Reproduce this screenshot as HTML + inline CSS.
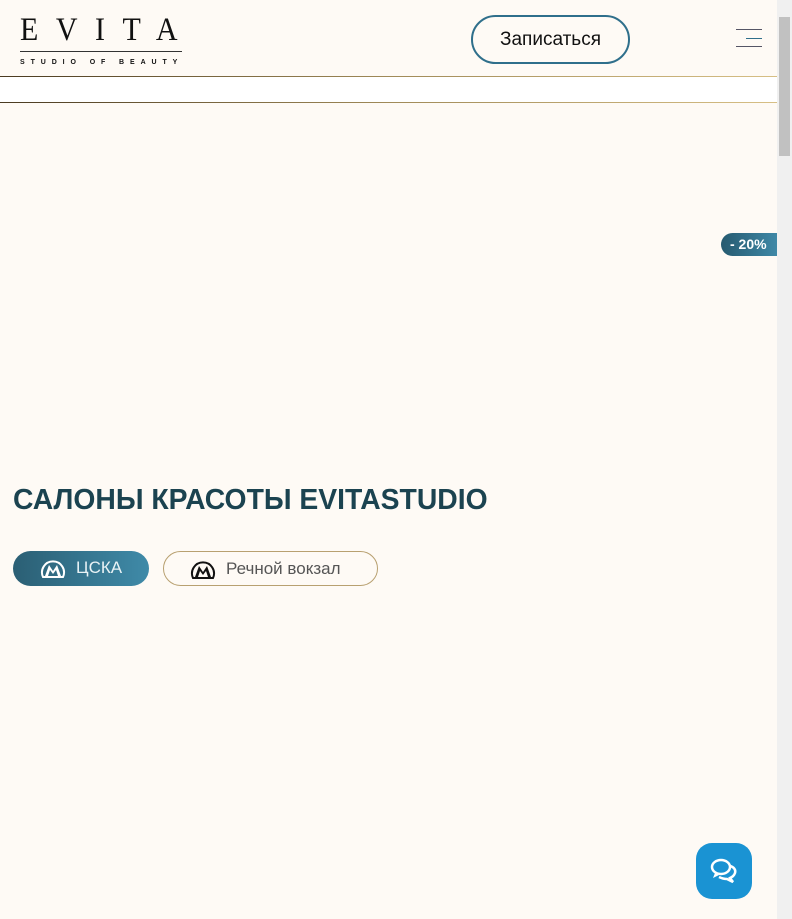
<!DOCTYPE html>
<html><head><meta charset="utf-8"><style>
*{margin:0;padding:0;box-sizing:border-box}
body{width:792px;height:919px;background:#fefaf5;font-family:"Liberation Sans",sans-serif;position:relative;overflow:hidden}
.sb{position:absolute;right:0;top:0;width:15px;height:919px;background:#f0f0f0}
.sb .th{position:absolute;left:2px;top:17px;width:11px;height:139px;background:#c1c1c1}
.logo{position:absolute;left:20px;top:14px;width:162px}
.logo .t{font-family:"Liberation Serif",serif;font-size:30px;letter-spacing:17.5px;color:#111;line-height:36px;height:37px;transform:scaleY(1.1);transform-origin:0 100%;white-space:nowrap}
.logo .l{border-top:1px solid #333}
.logo .s{font-size:7px;letter-spacing:5.9px;font-weight:bold;color:#111;margin-top:7px;white-space:nowrap}
.btn{position:absolute;left:471px;top:15px;width:159px;height:49px;border:2px solid #2f6f8b;border-radius:25px;text-align:center;line-height:45px;font-size:19px;color:#111}
.menu div{position:absolute;right:30px;height:1px;background:#556}
.hl{position:absolute;left:0;width:777px;height:1px;background:linear-gradient(90deg,#4a3a20,#a08a58,#d7bf85)}
.strip{position:absolute;left:0;top:77px;width:777px;height:25px;background:#fff}
.badge{position:absolute;left:721px;top:233px;width:56px;height:23px;background:linear-gradient(90deg,#265a70,#3f88a6);border-radius:12px 0 0 12px;color:#fff;font-size:14px;line-height:23px;padding-left:9px;font-weight:bold}
h1{position:absolute;left:13px;top:484px;font-size:29px;font-weight:900;color:#1b4350;letter-spacing:0;transform:scaleX(0.976);transform-origin:0 0;white-space:nowrap}
.p{position:absolute;top:551px;height:35px;border-radius:18px;font-size:17px;line-height:33px}
.p1{left:13px;width:136px;background:linear-gradient(90deg,#2b5f74,#3f8aa8);color:#e8f2f5}
.p2{left:163px;width:215px;border:1px solid #b8a070;color:#555}
.p svg{position:absolute;top:7px}
.chat{position:absolute;left:696px;top:843px;width:56px;height:56px;border-radius:16px;background:#1a93d3}
</style></head><body>
<div class="logo"><div class="t">EVITA</div><div class="l"></div><div class="s">STUDIO OF BEAUTY</div></div>
<div class="btn">Записаться</div>
<div class="menu"><div style="top:29px;width:26px"></div><div style="top:38px;width:16px;background:#2f6f8b"></div><div style="top:46px;width:26px"></div></div>
<div class="hl" style="top:76px"></div>
<div class="strip"></div>
<div class="hl" style="top:102px"></div>
<div class="badge">- 20%</div>
<h1>САЛОНЫ КРАСОТЫ EVITASTUDIO</h1>
<div class="p p1"><svg style="left:27px" width="26" height="21" viewBox="0 0 26 21"><path d="M3 19A11 11 0 1 1 23 19Z" fill="none" stroke="#fff" stroke-width="2"/><path d="M5 18L9 7L13 13L17 7L21 18H18L16 12L13 16L10 12L8 18Z" fill="#fff"/></svg><span style="position:absolute;left:63px">ЦСКА</span></div>
<div class="p p2"><svg style="left:26px" width="26" height="21" viewBox="0 0 26 21"><path d="M3 19A11 11 0 1 1 23 19Z" fill="none" stroke="#111" stroke-width="2"/><path d="M5 18L9 7L13 13L17 7L21 18H18L16 12L13 16L10 12L8 18Z" fill="#111"/></svg><span style="position:absolute;left:62px">Речной вокзал</span></div>
<div class="chat"><svg width="56" height="56" viewBox="0 0 56 56"><ellipse cx="25" cy="24" rx="9" ry="7" fill="none" stroke="#fff" stroke-width="2.5"/><path d="M19 30l-2 5 6-3" fill="#fff"/><path d="M34 23c4 1 6 4 5 7-1 3-3 4-5 5l3 4-6-3c-3 0-6-1-8-2" fill="none" stroke="#fff" stroke-width="2.5"/></svg></div>
<div class="sb"><div class="th"></div></div>
</body></html>
